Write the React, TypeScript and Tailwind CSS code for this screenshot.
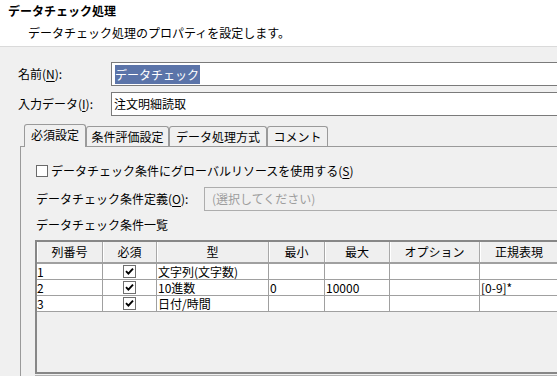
import React from 'react'

const font = { fontFamily: '"Noto Sans CJK JP", "Noto Sans", sans-serif' }

function Mn({ k }: { readonly k: string }) {
  return (
    <>
      (<span className="underline underline-offset-2">{k}</span>)
    </>
  )
}

function Check() {
  return (
    <span className="inline-flex h-[13px] w-[13px] items-center justify-center border border-[#6f6f6f] bg-white">
      <svg width="9" height="9" viewBox="0 0 9 9">
        <path d="M1 4.2 L3.4 6.6 L8 1.6" fill="none" stroke="#000" strokeWidth="1.9" />
      </svg>
    </span>
  )
}

const cols = 'grid grid-cols-[66px_54px_112px_56px_65px_90px_79px_60px]'
const head = ['列番号', '必須', '型', '最小', '最大', 'オプション', '正規表現', '']
const rows = [
  ['1', '文字列(文字数)', '', '', '', '', ''],
  ['2', '10進数', '0', '10000', '', '[0-9]*', ''],
  ['3', '日付/時間', '', '', '', '', ''],
]

const tabs = [
  { label: '条件評価設定', w: 'w-[83px]' },
  { label: 'データ処理方式', w: 'w-[98px]' },
  { label: 'コメント', w: 'w-[61px]' },
]

export default function App() {
  return (
    <div style={font} className="h-[376px] w-[557px] overflow-hidden bg-[#f0f0f0] text-[12px] text-black">
      {/* Header */}
      <div className="h-[47px] border-b border-[#dadada] bg-white pt-[3px]">
        <div className="h-[16px] pl-[8px] font-bold leading-[16px]">データチェック処理</div>
        <div className="mt-[6px] h-[16px] pl-[28px] leading-[16px]">データチェック処理のプロパティを設定します。</div>
      </div>

      {/* Form */}
      <div className="mt-[15px] w-[600px]">
        <div className="flex h-[24px] items-center">
          <div className="w-[111px] pl-[18px] leading-[16px]">
            名前<Mn k="N" />:
          </div>
          <div className="flex h-[24px] flex-1 items-center border border-[#7a7a7a] bg-white pl-[3px]">
            <span className="inline-block h-[19px] bg-[#5b74a9] pr-[1px] leading-[19px] text-white">データチェック</span>
          </div>
        </div>
        <div className="mt-[6px] flex h-[24px] items-center">
          <div className="w-[111px] pl-[18px] leading-[16px]">
            入力データ<Mn k="I" />:
          </div>
          <div className="flex h-[24px] flex-1 items-center border border-[#7a7a7a] bg-white pl-[2px] leading-[16px]">
            注文明細読取
          </div>
        </div>
      </div>

      {/* Tabs */}
      <div className="mt-[8px] flex h-[22px] items-end pl-[24px]">
        <div className="relative z-10 -mb-px flex h-[23px] w-[62px] items-start justify-center rounded-t-[3px] border border-b-0 border-[#9a9a9a] bg-[#f0f0f0] pt-[2px] leading-[16px]">
          必須設定
        </div>
        {tabs.map(t => (
          <div
            key={t.label}
            className={`flex h-[20px] ${t.w} items-center justify-center rounded-t-[3px] border border-b-0 border-[#9a9a9a] bg-[#f0f0f0] leading-[16px]`}
          >
            {t.label}
          </div>
        ))}
      </div>

      {/* Panel */}
      <div className="ml-[20px] h-[240px] w-[600px] border-l border-t border-[#9a9a9a] pl-[15px] pt-[12px]">
        <div className="flex h-[24px] items-center">
          <span className="h-[12px] w-[12px] border border-[#6a6a6a] bg-white" />
          <span className="ml-[3px] leading-[16px]">
            データチェック条件にグローバルリソースを使用する<Mn k="S" />
          </span>
        </div>

        <div className="mt-[4px] flex h-[24px] items-center">
          <div className="w-[168px] leading-[16px]">
            データチェック条件定義<Mn k="O" />:
          </div>
          <div className="flex h-[24px] flex-1 items-center border border-[#adadad] pl-[7px] leading-[16px] text-[#9d9d9d]">
            (選択してください)
          </div>
        </div>

        <div className="mt-[4px] flex h-[20px] items-center leading-[16px]">データチェック条件一覧</div>

        {/* Table */}
        <div className="-ml-px mt-[5px] h-[134px] border-2 border-[#878787] bg-[#f0f0f0]">
          <div className={`${cols} h-[22px] border-b-2 border-[#a0a0a0] bg-[#efefef]`}>
            {head.map((h, i) => (
              <div key={i} className="flex items-center justify-center border-r border-[#a8a8a8] leading-[16px] shadow-[inset_1px_0_0_#fff]">
                {h}
              </div>
            ))}
          </div>
          {rows.map(r => (
            <div key={r[0]} className={`${cols} h-[16px] bg-white`}>
              <div className="flex items-center border-b border-r border-[#a0a0a0] leading-[15px]">{r[0]}</div>
              <div className="flex items-center justify-center border-b border-r border-[#a0a0a0]">
                <Check />
              </div>
              {r.slice(1).map((c, i) => (
                <div key={i} className="flex items-center border-b border-r border-[#a0a0a0] pl-px leading-[15px]">
                  {c}
                </div>
              ))}
            </div>
          ))}
        </div>
        <div className="-ml-px mt-px h-px bg-[#b4b4b4]" />
      </div>
    </div>
  )
}
